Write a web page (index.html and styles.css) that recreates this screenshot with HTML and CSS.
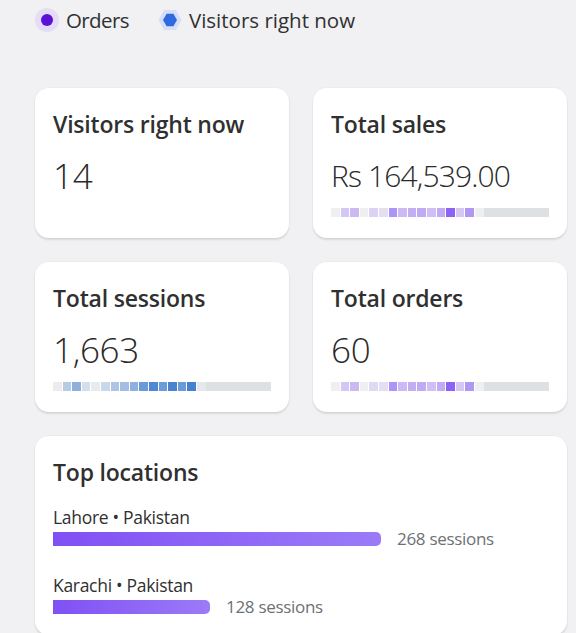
FILE: index.html
```html
<!DOCTYPE html>
<html lang="en">
<head>
<meta charset="utf-8">
<title>Dashboard</title>
<link rel="stylesheet" href="styles.css">
</head>
<body>
<div class="page">
  <div class="legend">
    <div class="legend-item">
      <span class="dot-icon"><span class="dot-inner"></span></span>
      <span class="legend-text">Orders</span>
    </div>
    <div class="legend-item">
      <svg class="hex-icon" width="24" height="24" viewBox="0 0 24 24">
        <polygon points="0.5,12 6.2,2 17.8,2 23.5,12 17.8,22 6.2,22" fill="#d6dff6"/>
        <polygon points="5,12 8.6,5.8 15.4,5.8 19,12 15.4,18.2 8.6,18.2" fill="#2f6ae2"/>
      </svg>
      <span class="legend-text">Visitors right now</span>
    </div>
  </div>

  <div class="grid">
    <div class="card">
      <div class="card-title">Visitors right now</div>
      <div class="card-value">14</div>
    </div>
    <div class="card">
      <div class="card-title">Total sales</div>
      <div class="card-value small">Rs 164,539.00</div>
      <div class="spark">
        <span style="background:#efefef"></span><span style="background:#d4c7f4"></span><span style="background:#cbb9f3"></span><span style="background:#efefef"></span><span style="background:#dcd3f2"></span><span style="background:#e4def2"></span><span style="background:#ae94f4"></span><span style="background:#ccbaf4"></span><span style="background:#c3aef4"></span><span style="background:#c0aaf3"></span><span style="background:#cfbff4"></span><span style="background:#c1abf4"></span><span style="background:#8c63f6"></span><span style="background:#d4c7f4"></span><span style="background:#b097f3"></span><span style="background:#efefef"></span><i class="rest"></i>
      </div>
    </div>
    <div class="card">
      <div class="card-title">Total sessions</div>
      <div class="card-value">1,663</div>
      <div class="spark">
        <span style="background:#ececec"></span><span style="background:#b5cbe6"></span><span style="background:#90b0dc"></span><span style="background:#d3dfea"></span><span style="background:#e8eaec"></span><span style="background:#c8d7ea"></span><span style="background:#adc4e4"></span><span style="background:#a4bde2"></span><span style="background:#8fb0dc"></span><span style="background:#6b9ad6"></span><span style="background:#4f88d2"></span><span style="background:#6d9bd6"></span><span style="background:#4a83cf"></span><span style="background:#6b9ad6"></span><span style="background:#4482d0"></span><span style="background:#e6e9ec"></span><i class="rest"></i>
      </div>
    </div>
    <div class="card">
      <div class="card-title">Total orders</div>
      <div class="card-value">60</div>
      <div class="spark">
        <span style="background:#efefef"></span><span style="background:#d4c7f4"></span><span style="background:#cbb9f3"></span><span style="background:#efefef"></span><span style="background:#e0d9f2"></span><span style="background:#e4def2"></span><span style="background:#ae94f4"></span><span style="background:#ccbaf4"></span><span style="background:#c3aef4"></span><span style="background:#c0aaf3"></span><span style="background:#cfbff4"></span><span style="background:#c1abf4"></span><span style="background:#8c63f6"></span><span style="background:#d4c7f4"></span><span style="background:#b097f3"></span><span style="background:#efefef"></span><i class="rest"></i>
      </div>
    </div>
    <div class="card wide">
      <div class="card-title">Top locations</div>
      <div class="loc-list">
        <div class="loc">
          <div class="loc-name">Lahore • Pakistan</div>
          <div class="loc-row">
            <div class="loc-bar" style="width:328px"></div>
            <span class="loc-count">268 sessions</span>
          </div>
        </div>
        <div class="loc">
          <div class="loc-name">Karachi • Pakistan</div>
          <div class="loc-row">
            <div class="loc-bar" style="width:157px"></div>
            <span class="loc-count">128 sessions</span>
          </div>
        </div>
      </div>
    </div>
  </div>
</div>
</body>
</html>
```

FILE: styles.css
```css
* { box-sizing: border-box; }
html, body {
  margin: 0;
  background: #f1f1f3;
  font-family: "Open Sans", "Noto Sans", sans-serif;
  color: #303030;
  overflow: hidden;
}
.page {
  padding: 8px 9px 0 35px;
}
.legend {
  display: flex;
  align-items: center;
  gap: 29px;
  height: 24px;
}
.legend-item {
  display: flex;
  align-items: center;
  gap: 7px;
}
.legend-item:first-child .legend-text {
  letter-spacing: -0.6px;
}
.dot-icon {
  width: 24px;
  height: 24px;
  border-radius: 50%;
  background: #e5ddf8;
  display: flex;
  align-items: center;
  justify-content: center;
}
.dot-inner {
  width: 12px;
  height: 12px;
  border-radius: 50%;
  background: #5b12d6;
}
.hex-icon { display: block; }
.legend-text {
  font-size: 20.5px;
  line-height: 24px;
  color: #303030;
  letter-spacing: 0;
}
.grid {
  margin-top: 56px;
  display: grid;
  grid-template-columns: 1fr 1fr;
  gap: 24px;
}
.card {
  background: #fff;
  border-radius: 14px;
  box-shadow: 0 2px 2px rgba(0,0,0,0.10), 0 0 0 1px rgba(0,0,0,0.02);
  padding: 20px 18px 21px;
  min-height: 150px;
}
.card.wide { grid-column: 1 / -1; }
.card-title {
  font-size: 23px;
  line-height: 32px;
  font-weight: 600;
  color: #303030;
  letter-spacing: -0.2px;
}
.card-value {
  margin-top: 14px;
  font-size: 35px;
  line-height: 44px;
  font-weight: 300;
  color: #2a2a2a;
  letter-spacing: -0.3px;
}
.card-value.small {
  font-size: 30px;
  letter-spacing: -0.85px;
}
.spark {
  margin-top: 10px;
  height: 9px;
  display: flex;
  gap: 1px;
}
.spark span {
  flex: 0 0 8.6px;
  height: 9px;
}
.spark .rest {
  flex: 1;
  margin-left: -1px;
  background: #dee1e4;
}
.loc-list {
  margin-top: 17px;
  display: flex;
  flex-direction: column;
  gap: 27px;
}
.loc-name {
  font-size: 17.5px;
  line-height: 24px;
  color: #303030;
  letter-spacing: -0.3px;
}
.loc-row {
  margin-top: 3px;
  display: flex;
  align-items: center;
  gap: 16px;
}
.loc-bar {
  height: 14px;
  border-radius: 0 5px 5px 0;
  background: linear-gradient(90deg, #8050f4, #9b7bf8);
}
.loc-count {
  font-size: 17px;
  line-height: 14px;
  color: #6d7175;
  letter-spacing: -0.3px;
}
```
